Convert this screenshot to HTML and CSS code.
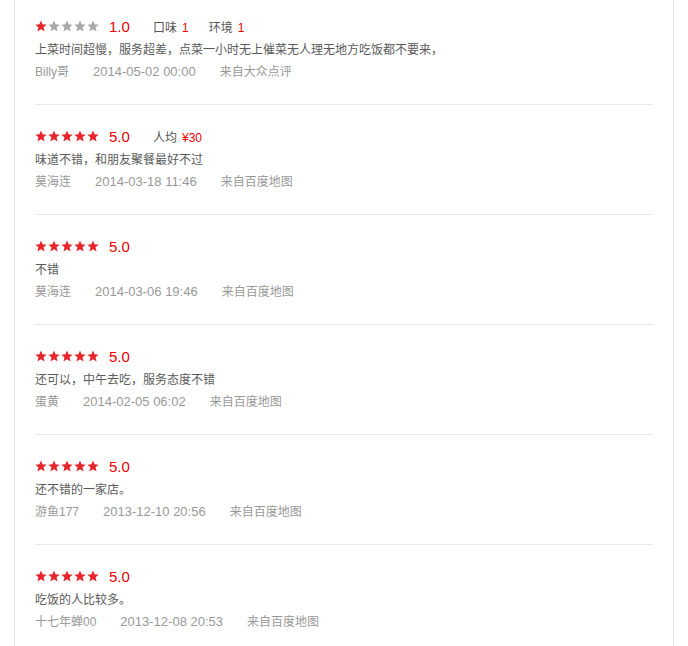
FILE: index.html
```html
<!DOCTYPE html>
<html lang="zh-CN">

<head>
   <meta charset="UTF-8" />
   <meta name="viewport" content="width=device-width, initial-scale=1.0" />
   <title>评论</title>
   <link rel="stylesheet" href="styles.css">
</head>

<body>
   <svg width="0" height="0" class="defs">
      <symbol id="star" viewBox="0 0 24 24">
         <polygon points="12,1 15.1,8.6 23.4,9.3 17.1,14.7 19.1,22.8 12,18.4 4.9,22.8 6.9,14.7 0.6,9.3 8.9,8.6" />
      </symbol>
   </svg>

   <div class="panel">
      <ul class="review-list">
         <li class="review">
            <div class="score-row">
               <span class="stars">
                  <svg class="star on"><use href="#star" /></svg><svg class="star"><use href="#star" /></svg><svg class="star"><use href="#star" /></svg><svg class="star"><use href="#star" /></svg><svg class="star"><use href="#star" /></svg>
               </span>
               <span class="score">1.0</span>
               <span class="sub">口味<em>1</em></span>
               <span class="sub">环境<em>1</em></span>
            </div>
            <p class="content">上菜时间超慢，服务超差，点菜一小时无上催菜无人理无地方吃饭都不要来，</p>
            <div class="meta"><span>Billy哥</span><span>2014-05-02 00:00</span><span>来自大众点评</span></div>
         </li>
         <li class="review">
            <div class="score-row">
               <span class="stars">
                  <svg class="star on"><use href="#star" /></svg><svg class="star on"><use href="#star" /></svg><svg class="star on"><use href="#star" /></svg><svg class="star on"><use href="#star" /></svg><svg class="star on"><use href="#star" /></svg>
               </span>
               <span class="score">5.0</span>
               <span class="sub">人均<em>¥30</em></span>
            </div>
            <p class="content">味道不错，和朋友聚餐最好不过</p>
            <div class="meta"><span>莫海连</span><span>2014-03-18 11:46</span><span>来自百度地图</span></div>
         </li>
         <li class="review">
            <div class="score-row">
               <span class="stars">
                  <svg class="star on"><use href="#star" /></svg><svg class="star on"><use href="#star" /></svg><svg class="star on"><use href="#star" /></svg><svg class="star on"><use href="#star" /></svg><svg class="star on"><use href="#star" /></svg>
               </span>
               <span class="score">5.0</span>
            </div>
            <p class="content">不错</p>
            <div class="meta"><span>莫海连</span><span>2014-03-06 19:46</span><span>来自百度地图</span></div>
         </li>
         <li class="review">
            <div class="score-row">
               <span class="stars">
                  <svg class="star on"><use href="#star" /></svg><svg class="star on"><use href="#star" /></svg><svg class="star on"><use href="#star" /></svg><svg class="star on"><use href="#star" /></svg><svg class="star on"><use href="#star" /></svg>
               </span>
               <span class="score">5.0</span>
            </div>
            <p class="content">还可以，中午去吃，服务态度不错</p>
            <div class="meta"><span>蛋黄</span><span>2014-02-05 06:02</span><span>来自百度地图</span></div>
         </li>
         <li class="review">
            <div class="score-row">
               <span class="stars">
                  <svg class="star on"><use href="#star" /></svg><svg class="star on"><use href="#star" /></svg><svg class="star on"><use href="#star" /></svg><svg class="star on"><use href="#star" /></svg><svg class="star on"><use href="#star" /></svg>
               </span>
               <span class="score">5.0</span>
            </div>
            <p class="content">还不错的一家店。</p>
            <div class="meta"><span>游鱼177</span><span>2013-12-10 20:56</span><span>来自百度地图</span></div>
         </li>
         <li class="review">
            <div class="score-row">
               <span class="stars">
                  <svg class="star on"><use href="#star" /></svg><svg class="star on"><use href="#star" /></svg><svg class="star on"><use href="#star" /></svg><svg class="star on"><use href="#star" /></svg><svg class="star on"><use href="#star" /></svg>
               </span>
               <span class="score">5.0</span>
            </div>
            <p class="content">吃饭的人比较多。</p>
            <div class="meta"><span>十七年蝉00</span><span>2013-12-08 20:53</span><span>来自百度地图</span></div>
         </li>
      </ul>
   </div>
</body>

</html>
```

FILE: styles.css
```css
* {
   margin: 0;
   padding: 0;
   box-sizing: border-box;
}

body {
   font-family: "Liberation Sans", "Noto Sans CJK SC", sans-serif;
   font-size: 12px;
   color: #555;
   background: #fff;
   height: 646px;
   overflow: hidden;
}

.defs {
   position: absolute;
}

.panel {
   margin: 0 14px;
   width: 660px;
   min-height: 646px;
   border-left: 1px solid #e6e6e6;
   border-right: 1px solid #e6e6e6;
   padding: 0 20px;
}

.review-list {
   list-style: none;
}

.review {
   padding: 18px 0 21px;
   border-bottom: 1px solid #e8e8e8;
}

.review:first-child {
   padding-top: 13px;
}

.score-row {
   display: flex;
   align-items: center;
   height: 26px;
}

.stars {
   display: flex;
   gap: 1px;
}

.star {
   width: 12px;
   height: 12px;
   fill: #a8a8a8;
}

.star.on {
   fill: #e5262d;
}

.score {
   font-size: 15px;
   color: #e00;
   margin-left: 10px;
   width: 44px;
}

.sub {
   color: #555;
   margin-right: 20px;
}

.sub em {
   font-style: normal;
   color: #e00;
   margin-left: 5px;
}

.content {
   line-height: 22px;
   height: 22px;
   color: #5a5a5a;
}

.meta {
   display: flex;
   gap: 24px;
   line-height: 22px;
   color: #999;
   font-size: 12px;
}

.meta span:nth-child(2) {
   font-size: 13px;
}
```
